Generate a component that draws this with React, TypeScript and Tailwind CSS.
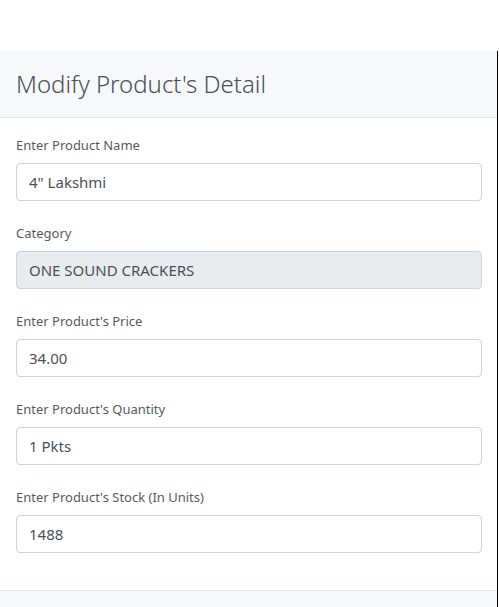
export default function App() {
  const fields = [
    { label: "Enter Product Name", value: "4\" Lakshmi", disabled: false },
    { label: "Category", value: "ONE SOUND CRACKERS", disabled: true },
    { label: "Enter Product's Price", value: "34.00", disabled: false },
    { label: "Enter Product's Quantity", value: "1 Pkts", disabled: false },
    { label: "Enter Product's Stock (In Units)", value: "1488", disabled: false },
  ];

  return (
    <div className="h-[607px] w-[499px] overflow-hidden bg-white font-['Segoe_UI','Noto_Sans',sans-serif]">
      <div className="mt-[51px] flex">
        <div className="w-[497px] rounded-tr-[3px] bg-white">
          {/* Header */}
          <div className="flex h-[67px] items-center border-b border-[#e3e6ea] bg-[#f7f8fa] pl-4">
            <h2 className="text-[24px] leading-[32px] font-light text-[#495057]">
              Modify Product's Detail
            </h2>
          </div>

          {/* Body */}
          <div className="flex flex-col gap-[22px] px-4 pt-[17px] pb-[37px]">
            {fields.map((f) => (
              <div key={f.label} className="flex flex-col gap-[8px]">
                <label className="block h-[20px] text-[13px] leading-[20px] text-[#555b61]">
                  {f.label}
                </label>
                <input
                  readOnly
                  disabled={f.disabled}
                  value={f.value}
                  className={`block h-[38px] w-[466px] rounded-[4px] border border-[#ced4da] px-3 text-[15px] text-[#495057] outline-none ${
                    f.disabled ? "bg-[#e9ecef]" : "bg-white"
                  }`}
                />
              </div>
            ))}
          </div>

          {/* Footer */}
          <div className="h-[40px] border-t border-[#e3e6ea] bg-[#f7f8fa]" />
        </div>
        <div className="h-[560px] w-px bg-black" />
      </div>
    </div>
  );
}
